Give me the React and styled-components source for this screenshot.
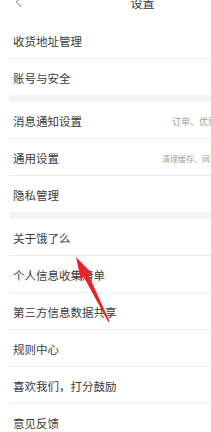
import React from "react";
import styled, { createGlobalStyle } from "styled-components";

const GlobalStyle = createGlobalStyle`
  html, body {
    margin: 0;
    padding: 0;
    background: #fff;
    overflow: hidden;
  }
  body {
    font-family: "Noto Sans CJK SC", "Noto Sans", sans-serif;
  }
`;

const Page = styled.div`
  position: relative;
  width: 211px;
  height: 432px;
  overflow: hidden;
  background: #fff;
`;

const Header = styled.div`
  height: 22px;
  width: 270px;
  overflow: hidden;
`;

const HeaderInner = styled.div`
  height: 44px;
  margin-top: -20px;
  display: flex;
  align-items: center;
  position: relative;
`;

const Back = styled.div`
  width: 40px;
  padding-left: 15px;
  display: flex;
  align-items: center;
`;

const Title = styled.div`
  flex: 1;
  text-align: center;
  font-size: 12px;
  color: #333;
  margin-right: 40px;
`;

const List = styled.div`
  margin-left: 9px;
`;

const Gap = styled.div`
  height: 7px;
  background: #f4f4f4;
`;

const Row = styled.div`
  display: flex;
  align-items: center;
  box-sizing: border-box;
  height: ${(p) => (p.last ? 36 : 37)}px;
  padding-left: 4px;
  padding-top: 2px;
  border-bottom: ${(p) => (p.last ? "none" : "1px solid #eeeeee")};
`;

const Label = styled.div`
  flex: 1;
  font-size: 11.5px;
  color: #3c3c3c;
  white-space: nowrap;
`;

const Hint = styled.div`
  flex: none;
  width: ${(p) => p.w}px;
  font-size: ${(p) => p.size}px;
  color: #a0a0a0;
  white-space: nowrap;
  overflow: hidden;
`;

const Arrow = styled.svg`
  position: absolute;
  left: 0;
  top: 0;
  pointer-events: none;
`;

const sections = [
  [{ label: "收货地址管理" }, { label: "账号与安全" }],
  [
    { label: "消息通知设置", hint: "订单、优惠", w: 39, size: 9 },
    { label: "通用设置", hint: "清理缓存、网", w: 49, size: 8 },
    { label: "隐私管理" },
  ],
  [
    { label: "关于饿了么" },
    { label: "个人信息收集清单" },
    { label: "第三方信息数据共享" },
    { label: "规则中心" },
    { label: "喜欢我们，打分鼓励" },
    { label: "意见反馈" },
  ],
];

export default function App() {
  return (
    <Page>
      <GlobalStyle />
      <Header>
        <HeaderInner>
          <Back>
            <svg width="8" height="12" viewBox="0 0 8 12">
              <path d="M6 1 L1.5 6 L6 11" fill="none" stroke="#777" strokeWidth="1" />
            </svg>
          </Back>
          <Title>设置</Title>
        </HeaderInner>
      </Header>
      <List>
        {sections.map((sec, si) => (
          <React.Fragment key={si}>
            {si > 0 && <Gap />}
            {sec.map((r, ri) => (
              <Row key={r.label} last={ri === sec.length - 1}>
                <Label>{r.label}</Label>
                {r.hint && (
                  <Hint w={r.w} size={r.size}>
                    {r.hint}
                  </Hint>
                )}
              </Row>
            ))}
          </React.Fragment>
        ))}
      </List>
      <Arrow width="211" height="432" viewBox="0 0 211 432">
        <polygon
          points="76,257 93.5,274.9 87.8,273.3 109.6,321.5 108.2,321.9 83.4,276.2 81.1,281.5"
          fill="#e8232a"
        />
      </Arrow>
    </Page>
  );
}
